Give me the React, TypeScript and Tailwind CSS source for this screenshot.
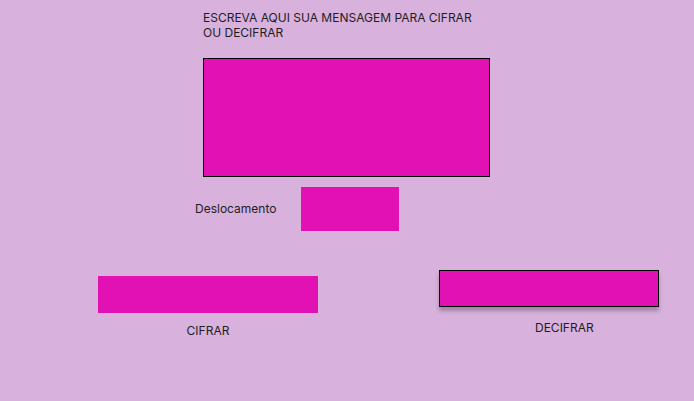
import React from 'react';

const App: React.FC = () => {
  return (
    <div className="w-[694px] h-[401px] bg-[#d8b1dc] text-[#1e1e1e] text-[12px] leading-[15px] font-['Inter',sans-serif] flex flex-col overflow-hidden">
      <div className="pl-[203px] pt-[10px] flex flex-col">
        <p>
          ESCREVA AQUI SUA MENSAGEM PARA CIFRAR
          <br />
          OU DECIFRAR
        </p>
        <textarea className="mt-[18px] w-[287px] h-[119px] bg-[#e211b4] border border-black outline-none resize-none" />
      </div>

      <div className="mt-[10px] pl-[195px] flex items-center">
        <label className="w-[106px] pb-[2px]">Deslocamento</label>
        <input type="number" className="w-[98px] h-[44px] bg-[#e211b4] outline-none appearance-none" />
      </div>

      <div className="pl-[98px] flex items-start gap-[121px]">
        <div className="pt-[45px] w-[220px] flex flex-col">
          <button className="w-[220px] h-[37px] bg-[#e211b4]" />
          <span className="mt-[10px] text-center">CIFRAR</span>
        </div>
        <div className="pt-[39px] w-[220px] flex flex-col">
          <button className="w-[220px] h-[37px] bg-[#e211b4] border border-black shadow-[0_4px_4px_rgba(0,0,0,0.25)]" />
          <span className="mt-[13px] pl-[96px]">DECIFRAR</span>
        </div>
      </div>
    </div>
  );
};

export default App;
